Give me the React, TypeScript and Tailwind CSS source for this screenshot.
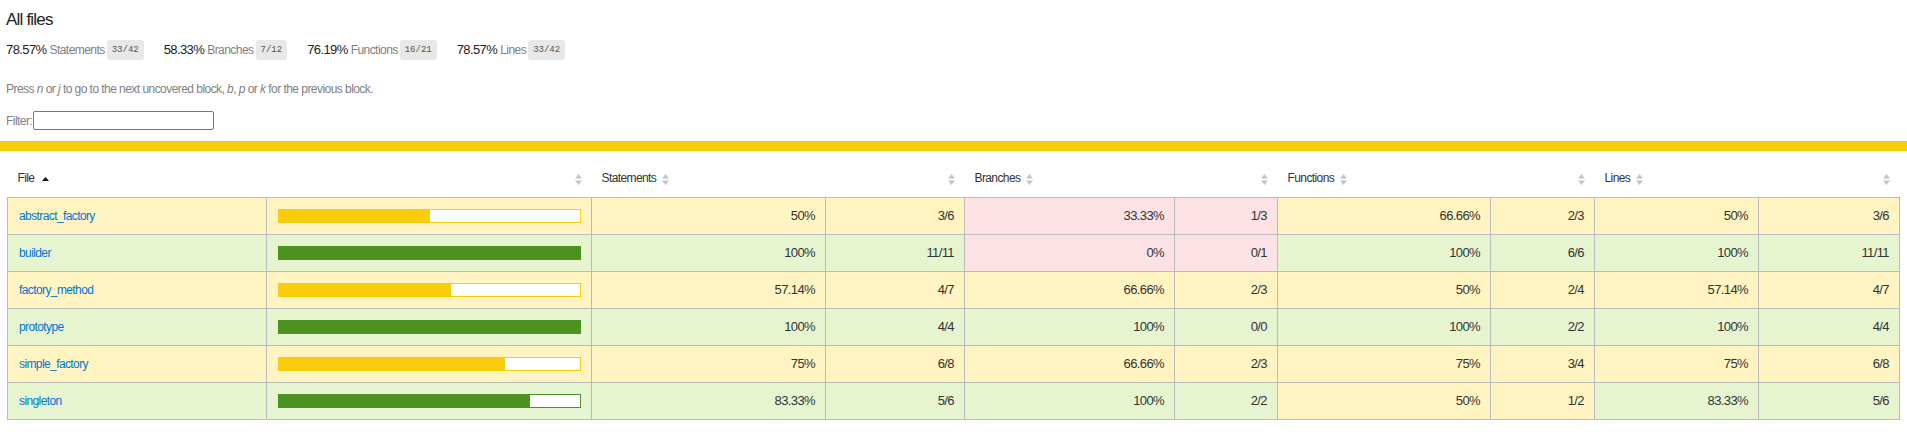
import React from 'react';

type Level = 'low' | 'medium' | 'high';

interface Metric {
    pct: number;
    label: string;
    frac: string;
}

interface FileRow {
    name: string;
    statements: Metric;
    branches: Metric;
    functions: Metric;
    lines: Metric;
}

const m = (pct: number, label: string, frac: string): Metric => ({ pct, label, frac });

const rows: FileRow[] = [
    { name: 'abstract_factory', statements: m(50, '50%', '3/6'), branches: m(33.33, '33.33%', '1/3'), functions: m(66.66, '66.66%', '2/3'), lines: m(50, '50%', '3/6') },
    { name: 'builder', statements: m(100, '100%', '11/11'), branches: m(0, '0%', '0/1'), functions: m(100, '100%', '6/6'), lines: m(100, '100%', '11/11') },
    { name: 'factory_method', statements: m(57.14, '57.14%', '4/7'), branches: m(66.66, '66.66%', '2/3'), functions: m(50, '50%', '2/4'), lines: m(57.14, '57.14%', '4/7') },
    { name: 'prototype', statements: m(100, '100%', '4/4'), branches: m(100, '100%', '0/0'), functions: m(100, '100%', '2/2'), lines: m(100, '100%', '4/4') },
    { name: 'simple_factory', statements: m(75, '75%', '6/8'), branches: m(66.66, '66.66%', '2/3'), functions: m(75, '75%', '3/4'), lines: m(75, '75%', '6/8') },
    { name: 'singleton', statements: m(83.33, '83.33%', '5/6'), branches: m(100, '100%', '2/2'), functions: m(50, '50%', '1/2'), lines: m(83.33, '83.33%', '5/6') },
];

const summary = [
    { pct: '78.57%', label: 'Statements', frac: '33/42' },
    { pct: '58.33%', label: 'Branches', frac: '7/12' },
    { pct: '76.19%', label: 'Functions', frac: '16/21' },
    { pct: '78.57%', label: 'Lines', frac: '33/42' },
];

const level = (pct: number): Level => (pct >= 80 ? 'high' : pct >= 50 ? 'medium' : 'low');

const cellBg: Record<Level, string> = {
    low: 'bg-[#fce1e5]',
    medium: 'bg-[#fff4c2]',
    high: 'bg-[#e6f5d0]',
};

const barBorder: Record<Level, string> = {
    low: 'border-[#c21f39]',
    medium: 'border-[#f9cd0b]',
    high: 'border-[#4d9221]',
};

const barFill: Record<Level, string> = {
    low: 'bg-[#c21f39]',
    medium: 'bg-[#f9cd0b]',
    high: 'bg-[#4d9221]',
};

const Sorter = () => (
    <svg width="7" height="11" viewBox="0 0 7 11" className="inline-block align-middle">
        <path d="M0 4.5 L3.5 0 L7 4.5 Z" fill="#c4c4c4" />
        <path d="M0 6.5 L3.5 11 L7 6.5 Z" fill="#c4c4c4" />
    </svg>
);

const SortAsc = () => (
    <svg width="7" height="4" viewBox="0 0 7 4" className="inline-block align-middle">
        <path d="M0 4 L3.5 0 L7 4 Z" fill="#111" />
    </svg>
);

// the report font is a condensed face; tightened Liberation Sans stands in for it
const td = 'border border-[#bbb] px-[10px] align-middle';
const num = `${td} text-right text-[13px] tracking-[-0.6px]`;
const th = 'px-[10px] font-normal text-[12px] tracking-[-0.6px]';

const PctCells: React.FC<{ metric: Metric }> = ({ metric }) => {
    const lv = level(metric.pct);
    return (
        <>
            <td className={`${num} ${cellBg[lv]}`}>{metric.label}</td>
            <td className={`${num} ${cellBg[lv]}`}>{metric.frac}</td>
        </>
    );
};

export default function App() {
    return (
        <div className="min-h-[441px] bg-white text-[#333] text-[12px] font-['Liberation_Sans',Arial,sans-serif]">
            <div className="px-[6px] pt-[9px]">
                <h1 className="text-[17px] leading-[22px] font-normal tracking-[-0.8px] text-[#222]">All files</h1>

                <div className="mt-[8px] flex items-center h-[21px]">
                    {summary.map((s) => (
                        <div key={s.label} className="flex items-center pr-[20px]">
                            <span className="text-[13px] tracking-[-0.6px] text-[#222]">{s.pct}</span>
                            <span className="ml-[3px] text-[12px] tracking-[-0.55px] text-[#808080]">{s.label}</span>
                            <span className="ml-[2px] inline-block rounded-[3px] bg-[#e8e8e8] px-[5px] py-[4px] text-[9px] leading-[12px] text-[#555] font-['Liberation_Mono',monospace]">
                                {s.frac}
                            </span>
                        </div>
                    ))}
                </div>

                <p className="mt-[21px] leading-[16px] text-[12px] tracking-[-0.55px] text-[#808080]">
                    Press <em>n</em> or <em>j</em> to go to the next uncovered block, <em>b</em>, <em>p</em> or <em>k</em> for the previous block.
                </p>

                <div className="mt-[14px] flex items-center h-[19px] text-[12px] tracking-[-0.55px] text-[#808080]">
                    <span>Filter:</span>
                    <input type="search" className="ml-[1px] w-[181px] h-[19px] border border-[#767676] rounded-[2px] bg-white outline-none" />
                </div>
            </div>

            <div className="mt-[11px] h-[10px] bg-[#f9cd0b]" />

            <div className="px-[7px] pt-[9px]">
                <table className="w-full table-fixed border-collapse">
                    <colgroup>
                        <col className="w-[259px]" />
                        <col className="w-[325px]" />
                        <col className="w-[234px]" />
                        <col className="w-[139px]" />
                        <col className="w-[210px]" />
                        <col className="w-[103px]" />
                        <col className="w-[213px]" />
                        <col className="w-[104px]" />
                        <col className="w-[164px]" />
                        <col />
                    </colgroup>
                    <thead>
                        <tr className="h-[37px] text-[#333]">
                            <th className={`${th} text-left`}>
                                File <span className="ml-[5px]"><SortAsc /></span>
                            </th>
                            <th className={`${th} text-right`}><Sorter /></th>
                            <th className={`${th} text-left`}>Statements <span className="ml-[3px]"><Sorter /></span></th>
                            <th className={`${th} text-right`}><Sorter /></th>
                            <th className={`${th} text-left`}>Branches <span className="ml-[3px]"><Sorter /></span></th>
                            <th className={`${th} text-right`}><Sorter /></th>
                            <th className={`${th} text-left`}>Functions <span className="ml-[3px]"><Sorter /></span></th>
                            <th className={`${th} text-right`}><Sorter /></th>
                            <th className={`${th} text-left`}>Lines <span className="ml-[3px]"><Sorter /></span></th>
                            <th className={`${th} text-right`}><Sorter /></th>
                        </tr>
                    </thead>
                    <tbody>
                        {rows.map((r) => {
                            const lv = level(r.statements.pct);
                            return (
                                <tr key={r.name} className="h-[37px]">
                                    <td className={`${td} ${cellBg[lv]} whitespace-nowrap pl-[11px] tracking-[-0.6px]`}>
                                        <a href="#" className="text-[#0074d9] no-underline">{r.name}</a>
                                    </td>
                                    <td className={`${td} ${cellBg[lv]} pl-[11px]`}>
                                        <div className={`h-[14px] w-full border bg-white ${barBorder[lv]}`}>
                                            <div className={`h-full ${barFill[lv]}`} style={{ width: `${r.statements.pct}%` }} />
                                        </div>
                                    </td>
                                    <PctCells metric={r.statements} />
                                    <PctCells metric={r.branches} />
                                    <PctCells metric={r.functions} />
                                    <PctCells metric={r.lines} />
                                </tr>
                            );
                        })}
                    </tbody>
                </table>
            </div>
        </div>
    );
}
